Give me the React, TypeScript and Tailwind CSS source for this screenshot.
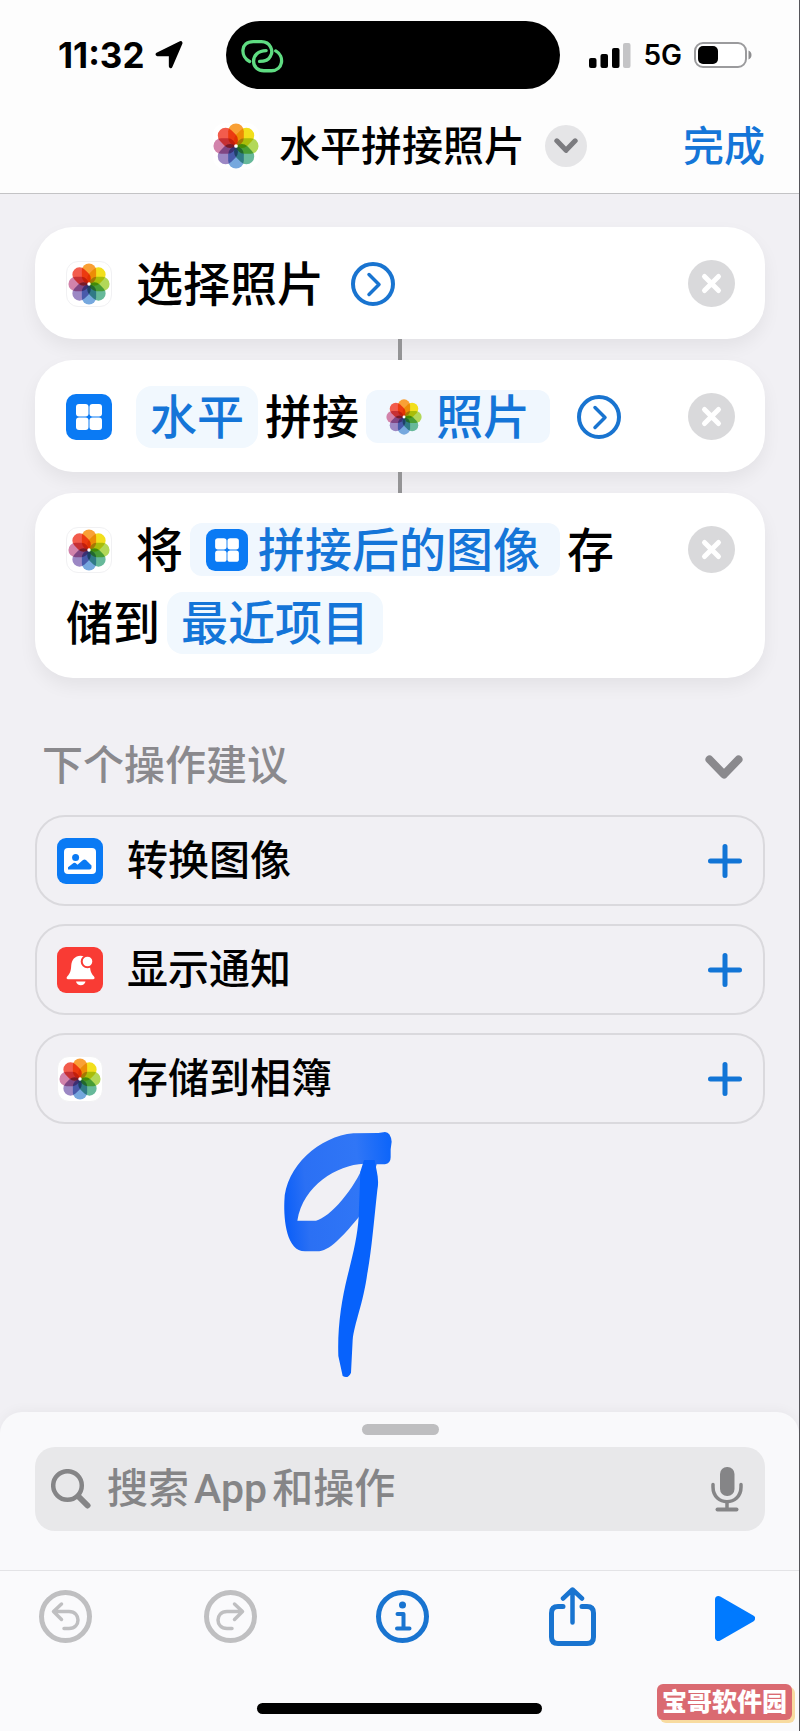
import type { ReactNode } from "react";

const petals = ["#f9a035", "#f2df1c", "#b2d858", "#67b99a", "#76a8de", "#9c88c4", "#d283ab", "#f25c4c"];

function Flower({ className }: { className: string }) {
  return (
    <svg viewBox="0 0 100 100" className={`isolate ${className}`} aria-hidden="true">
      {petals.map((color, i) => (
        <rect
          key={color}
          x="33"
          y="1"
          width="34"
          height="48"
          rx="17"
          fill={color}
          transform={`rotate(${i * 45} 50 50)`}
          className="mix-blend-multiply"
        />
      ))}
      <circle cx="50" cy="50" r="4" fill="#fff" />
    </svg>
  );
}

function PhotosTile() {
  return (
    <span className="flex size-[46px] shrink-0 items-center justify-center rounded-xl border border-[#f1f1f3] bg-white">
      <Flower className="size-[42px]" />
    </span>
  );
}

function GridTile({ className }: { className: string }) {
  return (
    <svg viewBox="0 0 46 46" className={`shrink-0 ${className}`} aria-hidden="true">
      <rect width="46" height="46" rx="10" fill="#0a7af4" />
      <g fill="#fff">
        <rect x="10" y="10" width="12.500" height="12.500" rx="3" />
        <rect x="23.500" y="10" width="12.500" height="12.500" rx="3" />
        <rect x="10" y="23.500" width="12.500" height="12.500" rx="3" />
        <rect x="23.500" y="23.500" width="12.500" height="12.500" rx="3" />
      </g>
    </svg>
  );
}

function ImageTile() {
  return (
    <svg viewBox="0 0 46 46" className="size-[46px] shrink-0" aria-hidden="true">
      <rect width="46" height="46" rx="9" fill="#0a7af4" />
      <rect x="7" y="10" width="32" height="26" rx="4" fill="#fff" />
      <circle cx="18.6" cy="19.5" r="3.5" fill="#0a7af4" />
      <path d="M11 31.5v-2.300l5.500-4.200q1-.7 2 .1l2 1.700 5.500-4.800q1.500-1.200 3 .1l5.500 5.400v2q0 2-2 2z" fill="#0a7af4" />
    </svg>
  );
}

function BellTile() {
  return (
    <svg viewBox="0 0 46 46" className="size-[46px] shrink-0" aria-hidden="true">
      <rect width="46" height="46" rx="9" fill="#f93b34" />
      <path
        d="M23.500 8.700c-5.500 0-9 4.200-9.300 10-.3 6-1.500 8-3.600 10.300-1.700 2-1 3.300 1 3.300h24c2 0 2.700-1.300 1-3.300-2-2.300-3.300-4.300-3.600-9.500C32.500 13 29 8.700 23.500 8.700z"
        fill="#fff"
      />
      <path d="M19 34.500h9.500c-.5 2.400-2.300 3.700-4.700 3.700s-4.300-1.300-4.800-3.700z" fill="#fff" />
      <circle cx="30.500" cy="14.500" r="5.800" fill="#fff" stroke="#f93b34" strokeWidth="2" />
    </svg>
  );
}

function ExpandButton() {
  return (
    <button type="button" aria-label="展开" className="ml-5 shrink-0">
      <svg viewBox="0 0 44 44" className="size-11 fill-none stroke-[#1974d0]" strokeLinecap="round" strokeLinejoin="round">
        <circle cx="22" cy="22" r="20" strokeWidth="4" />
        <path d="M18 12.500 28 22.500 18 32.500" strokeWidth="3.500" />
      </svg>
    </button>
  );
}

function Token({ icon, children }: { icon?: ReactNode; children: ReactNode }) {
  return (
    <button
      type="button"
      className={
        icon
          ? "flex h-[53px] items-center gap-[10px] rounded-xl bg-[#f0f7fe] pr-5 pl-4 text-[#1475d8]"
          : "flex h-[62px] items-center rounded-2xl bg-[#f1f8fe] px-[14px] text-[#1475d8]"
      }
    >
      {icon}
      {children}
    </button>
  );
}

function ActionCard({ children }: { children: ReactNode }) {
  return (
    <li className="flex items-start justify-between rounded-[38px] bg-white pt-5 pr-[30px] pb-[19px] pl-[31px] text-[47px] font-medium shadow-[0_8px_18px_rgba(0,0,0,0.06)]">
      <div className="flex max-w-[590px] flex-wrap gap-x-[7px] leading-[73px] *:my-auto">{children}</div>
      <div className="flex h-[73px] items-center">
        <button type="button" aria-label="删除">
          <svg viewBox="0 0 47 47" className="size-[47px]">
            <circle cx="23.500" cy="23.500" r="23.500" fill="#d9d9db" />
            <path d="m16.500 16.500 14 14m0-14-14 14" stroke="#fff" strokeWidth="5" strokeLinecap="round" />
          </svg>
        </button>
      </div>
    </li>
  );
}

function Connector() {
  return <li aria-hidden="true" className="mx-auto h-[21px] w-1 bg-[#949496]" />;
}

function Chevron({ className, width }: { className: string; width: number }) {
  return (
    <svg viewBox="0 0 38 24" className={className} fill="none" stroke="currentColor" strokeWidth={width} strokeLinecap="round" strokeLinejoin="round">
      <path d="m4.500 4.500 14.500 15 14.500-15" />
    </svg>
  );
}

function StatusBar() {
  return (
    <div className="flex items-center">
      <div className="flex items-center gap-[10px] pl-[58px]">
        <time className="text-[35px] leading-none font-bold">11:32</time>
        <svg viewBox="0 0 84 84" className="size-7" aria-hidden="true">
          <path d="m77 6-30 70V40H7z" stroke="#000" strokeWidth="11" strokeLinejoin="round" />
        </svg>
      </div>
      <div className="ml-auto flex h-[68px] w-[334px] items-center rounded-full bg-black pl-[14px]">
        <svg viewBox="720 108 136 110" className="h-[37px] w-[45px] fill-none stroke-[#5fdc82]" strokeWidth="10" strokeLinecap="round">
          <path d="M749 181C721 167 720 121 760 121h25c27 0 37 29 27 44-6 12-17 16-33 16" />
          <path d="M799 148c-24 0-38 15-38 32 0 18 14 29 31 29h23c35 0 41-44 13-60" />
        </svg>
      </div>
      <div className="flex items-center gap-3 pr-[47px] pl-[29px]">
        <svg viewBox="0 0 42 25" className="h-[25px] w-[42px]" aria-hidden="true">
          <rect y="15" width="7.500" height="10" rx="2" />
          <rect x="11.500" y="11" width="7.500" height="14" rx="2" />
          <rect x="23" y="5" width="7.500" height="20" rx="2" />
          <rect x="34" width="7.500" height="25" rx="2" fill="#c4c4c6" />
        </svg>
        <span className="text-[28px] leading-none font-semibold">5G</span>
        <svg viewBox="0 0 58 26" className="h-[26px] w-[58px]" aria-hidden="true">
          <rect x="1" y="1" width="51" height="24" rx="8" fill="#fff" stroke="#9b9b9d" strokeWidth="2" />
          <rect x="4" y="4" width="20" height="18" rx="5" />
          <path d="M54.500 8.500c4 1.500 4 7.500 0 9z" fill="#8e8e90" />
        </svg>
      </div>
    </div>
  );
}

const suggestions = [
  { label: "转换图像", icon: <ImageTile /> },
  { label: "显示通知", icon: <BellTile /> },
  { label: "存储到相簿", icon: <PhotosTile /> },
];

// Brush strokes left over the empty part of the editor
function Scribble() {
  return (
    <svg viewBox="120 60 351 750" className="mt-[6px] ml-[245px] h-[250px] w-[117px]" aria-hidden="true">
      <defs>
        <linearGradient id="brush" x1="0" x2="1" y1="0.500" y2="0.400">
          <stop offset="0" stopColor="#0d60f8" />
          <stop offset="0.200" stopColor="#2b70f4" />
          <stop offset="0.700" stopColor="#3076f6" />
          <stop offset="1" stopColor="#0f66fa" />
        </linearGradient>
      </defs>
      <path
        fill="url(#brush)"
        fillRule="evenodd"
        d="M435 66 415 69 340 70C240 78 135 170 133 275 131 330 140 424 195 424H238C275 420 320 365 356 322L400 200 410 163H435Q452 160 452 142V118L455 95Q452 67 435 66ZM372 161C290 165 190 225 172 332H228C270 322 345 235 372 161Z"
      />
      <path
        fill="#0762fc"
        d="M372 150H404C408 180 419 205 412 240 402 330 395 420 382 490 370 580 343 640 338 690L333 788Q324 808 308 798L295 738C292 650 305 570 322 500 340 430 352 380 356 322L361 185Z"
      />
    </svg>
  );
}

function HistoryIcon({ className }: { className?: string }) {
  return (
    <svg viewBox="0 0 53 53" className={`size-[53px] fill-none stroke-[#bfbfc1] ${className ?? ""}`} strokeLinecap="round" strokeLinejoin="round">
      <circle cx="26.500" cy="26.500" r="24" strokeWidth="5" />
      <path d="M22.500 14 14.500 21.500 22.500 29.500M15 21.500H30C42 21.500 42 38.500 30 38.500H25" strokeWidth="3.500" />
    </svg>
  );
}

function Toolbar() {
  return (
    <nav className="flex h-[60px] items-center justify-between pr-[44px] pl-[39px] text-[#1974d0]">
      <div className="flex gap-28">
        <button type="button" aria-label="撤销"><HistoryIcon /></button>
        <button type="button" aria-label="重做"><HistoryIcon className="-scale-x-100" /></button>
      </div>
      <button type="button" aria-label="信息">
        <svg viewBox="0 0 53 53" className="size-[53px] fill-none" stroke="currentColor" strokeLinecap="round" strokeLinejoin="round">
          <circle cx="26.500" cy="26.500" r="24" strokeWidth="5" />
          <circle cx="26.500" cy="15" r="3.500" fill="currentColor" stroke="none" />
          <path d="M21.500 24H27.500V38.500M21 38.500H33.500" strokeWidth="4" />
        </svg>
      </button>
      <button type="button" aria-label="分享">
        <svg viewBox="0 0 47 59" className="h-[59px] w-[47px] fill-none" stroke="currentColor" strokeLinecap="round" strokeLinejoin="round">
          <path d="M14 19.500H9Q2.500 19.500 2.500 26V50Q2.500 56.500 9 56.500H38Q44.500 56.500 44.500 50V26Q44.500 19.500 38 19.500H33" strokeWidth="5" />
          <path d="M23.500 3V35.500M14 11.500 23.500 2.500 33 11.500" strokeWidth="4.500" />
        </svg>
      </button>
      <button type="button" aria-label="运行">
        <svg viewBox="0 0 40 45" className="mt-1 h-[45px] w-10" aria-hidden="true">
          <path d="M3.500 3.500 36.500 22.500 3.500 41.500Z" fill="#007aff" stroke="#007aff" strokeWidth="7" strokeLinejoin="round" />
        </svg>
      </button>
    </nav>
  );
}

export default function App() {
  return (
    <div className="flex min-h-screen flex-col border-r border-[#55555a] bg-[#f1f0f4] font-['Inter','Noto_Sans_CJK_SC',sans-serif] text-black">
      <header className="border-b border-[#c3c3c5] bg-[#fdfdfd] pt-[21px] pb-[15px]">
        <StatusBar />
        <div className="mt-[25px] grid h-16 grid-cols-[1fr_auto_1fr] items-center pr-[34px] pl-[35px]">
          <div className="col-start-2 flex items-center gap-5">
            <span className="flex size-[46px] items-center justify-center rounded-xl bg-white">
              <Flower className="size-[46px]" />
            </span>
            <h1 className="text-[41px] leading-none font-medium">水平拼接照片</h1>
            <button type="button" aria-label="更多" className="flex size-[42px] items-center justify-center rounded-full bg-[#e5e5e7] text-[#7b7b7f]">
              <Chevron className="w-6" width={8} />
            </button>
          </div>
          <button type="button" className="justify-self-end text-[41px] leading-none font-medium text-[#1475d8]">
            完成
          </button>
        </div>
      </header>

      <main className="flex-1 pt-[33px] pr-[34px] pb-5 pl-[35px]">
        <ol>
          <ActionCard>
            <PhotosTile />
            <span className="ml-[17px]">选择照片</span>
            <ExpandButton />
          </ActionCard>
          <Connector />
          <ActionCard>
            <GridTile className="mr-[17px] size-[46px]" />
            <Token>水平</Token>
            <span>拼接</span>
            <Token icon={<Flower className="mx-1 size-9" />}>照片</Token>
            <ExpandButton />
          </ActionCard>
          <Connector />
          <ActionCard>
            <PhotosTile />
            <span className="ml-[17px]">将</span>
            <Token icon={<GridTile className="size-[42px]" />}>拼接后的图像</Token>
            <span>存</span>
            <span>储到</span>
            <Token>最近项目</Token>
          </ActionCard>
        </ol>

        <div className="mt-[57px] mb-5 flex h-[60px] items-center justify-between pr-[22px] pl-[7px] text-[#8a898d]">
          <h2 className="text-[41px] leading-none font-medium">下个操作建议</h2>
          <button type="button" aria-label="收起" className="pt-1">
            <Chevron className="w-[38px]" width={8} />
          </button>
        </div>

        <ul className="flex flex-col gap-[18px]">
          {suggestions.map(({ label, icon }) => (
            <li key={label}>
              <button type="button" className="flex h-[91px] w-full items-center gap-6 rounded-[30px] border-2 border-[#dad9dd] pr-[21px] pl-5 text-left">
                {icon}
                <span className="flex-1 text-[41px] leading-none font-medium">{label}</span>
                <svg viewBox="0 0 34 34" className="size-[34px]" aria-hidden="true">
                  <path d="M17 2.500v29M2.500 17h29" stroke="#1275d6" strokeWidth="5" strokeLinecap="round" />
                </svg>
              </button>
            </li>
          ))}
        </ul>

        <Scribble />
      </main>

      <footer className="rounded-t-[22px] bg-[#f9f9fb] shadow-[0_-2px_12px_rgba(0,0,0,0.04)]">
        <div className="pt-3 pr-[34px] pb-[39px] pl-[35px]">
          <div className="mx-auto mb-3 h-[11px] w-[77px] rounded-full bg-[#bebec0]" />
          <label className="flex h-[84px] items-center rounded-[20px] bg-[#e8e8ea] pr-[22px] pl-4">
            <svg viewBox="0 0 40 40" className="size-10 shrink-0 fill-none stroke-[#858587]" strokeLinecap="round" aria-hidden="true">
              <circle cx="16.500" cy="16.500" r="14.300" strokeWidth="4.500" />
              <path d="m27.500 27.500 9 9" strokeWidth="6" />
            </svg>
            <input
              type="search"
              aria-label="搜索App和操作"
              placeholder="搜索App和操作"
              className="ml-4 min-w-0 flex-1 bg-transparent font-['Roboto','Noto_Sans_CJK_SC',sans-serif] text-[41px] leading-[60px] font-medium outline-none [text-autospace:normal] placeholder:text-[#858587]"
            />
            <button type="button" aria-label="语音输入">
              <svg viewBox="0 0 32 45" className="h-[45px] w-8 fill-none stroke-[#858587]" strokeLinecap="round">
                <rect x="9" y="0" width="14.500" height="29" rx="7" fill="#858587" stroke="none" />
                <path d="M2 17.500V20C2 39.500 30 39.500 30 20V17.500M16 35V42" strokeWidth="3.500" />
                <path d="M6.500 42.500H25.500" strokeWidth="4" />
              </svg>
            </button>
          </label>
        </div>
        <div className="relative border-t border-[#e3e3e6] bg-[#fafafc] pt-[15px] pb-[17px]">
          <Toolbar />
          <div className="mx-auto mt-[57px] h-[11px] w-[285px] rounded-full bg-black" />
          <span className="absolute right-[7px] bottom-[11px] rounded-md bg-[#da6a71] px-[5px] text-[25px] leading-9 font-black text-white shadow-[3px_3px_0_#f8dba0]">
            宝哥软件园
          </span>
        </div>
      </footer>
    </div>
  );
}
